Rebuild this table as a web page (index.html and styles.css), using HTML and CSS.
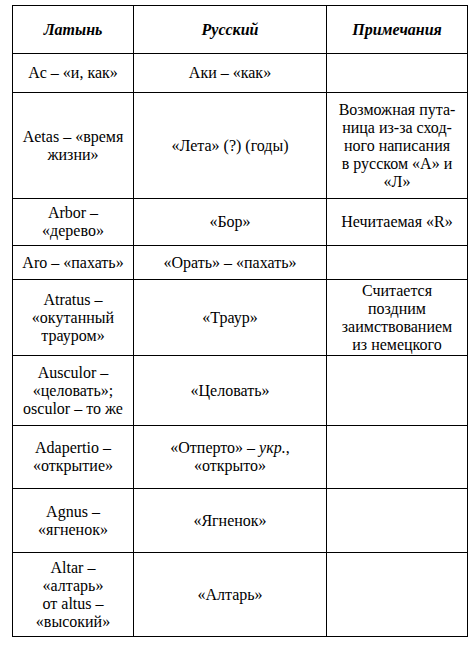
FILE: index.html
```html
<!DOCTYPE html>
<html lang="ru">
<head>
<meta charset="utf-8">
<link rel="stylesheet" href="styles.css">
</head>
<body>
<div class="words" role="table">
  <div class="cell head"><span>Латынь</span></div><div class="cell head"><span>Русский</span></div><div class="cell head"><span>Примечания</span></div>

  <div class="cell"><span>Ac – «и, как»</span></div><div class="cell"><span>Аки – «как»</span></div><div class="cell"></div>

  <div class="cell"><span>Aetas – «время<br>жизни»</span></div><div class="cell"><span>«Лета» (?) (годы)</span></div><div class="cell"><span>Возможная пута-<br>ница из-за сход-<br>ного написания<br>в русском «А» и<br>«Л»</span></div>

  <div class="cell"><span>Arbor –<br>«дерево»</span></div><div class="cell"><span>«Бор»</span></div><div class="cell"><span>Нечитаемая «R»</span></div>

  <div class="cell"><span>Aro – «пахать»</span></div><div class="cell"><span>«Орать» – «пахать»</span></div><div class="cell"></div>

  <div class="cell"><span>Atratus –<br>«окутанный<br>трауром»</span></div><div class="cell"><span>«Траур»</span></div><div class="cell"><span>Считается<br>поздним<br>заимствованием<br>из немецкого</span></div>

  <div class="cell"><span>Ausculor –<br>«целовать»;<br>osculor – то же</span></div><div class="cell"><span>«Целовать»</span></div><div class="cell"></div>

  <div class="cell"><span>Adapertio –<br>«открытие»</span></div><div class="cell"><span>«Отперто» – <i class="abbr">укр.</i>,<br>«открыто»</span></div><div class="cell"></div>

  <div class="cell"><span>Agnus –<br>«ягненок»</span></div><div class="cell"><span>«Ягненок»</span></div><div class="cell"></div>

  <div class="cell"><span>Altar –<br>«алтарь»<br>от altus –<br>«высокий»</span></div><div class="cell"><span>«Алтарь»</span></div><div class="cell"></div>
</div>
</body>
</html>
```
FILE: styles.css
```css
body {
  margin: 0;
  padding: 5px 0 0 12px;
  font-size: 16px;
}
.words {
  display: grid;
  grid-template-columns: 121px 193px 141px;
  grid-template-rows: 48px 39px 106px 47px 34px 76px 70px 63px 64px 84px;
  width: max-content;
  border-top: 1px solid #000;
  border-left: 1px solid #000;
}
.cell {
  font-family: "Liberation Serif";
  box-sizing: border-box;
  display: flex;
  align-items: center;
  justify-content: center;
  text-align: center;
  padding: 0 3px;
  border-right: 1px solid #000;
  border-bottom: 1px solid #000;
}
.head {
  font-weight: bold;
  font-style: italic;
}
.abbr {
  font-style: italic;
}
```
